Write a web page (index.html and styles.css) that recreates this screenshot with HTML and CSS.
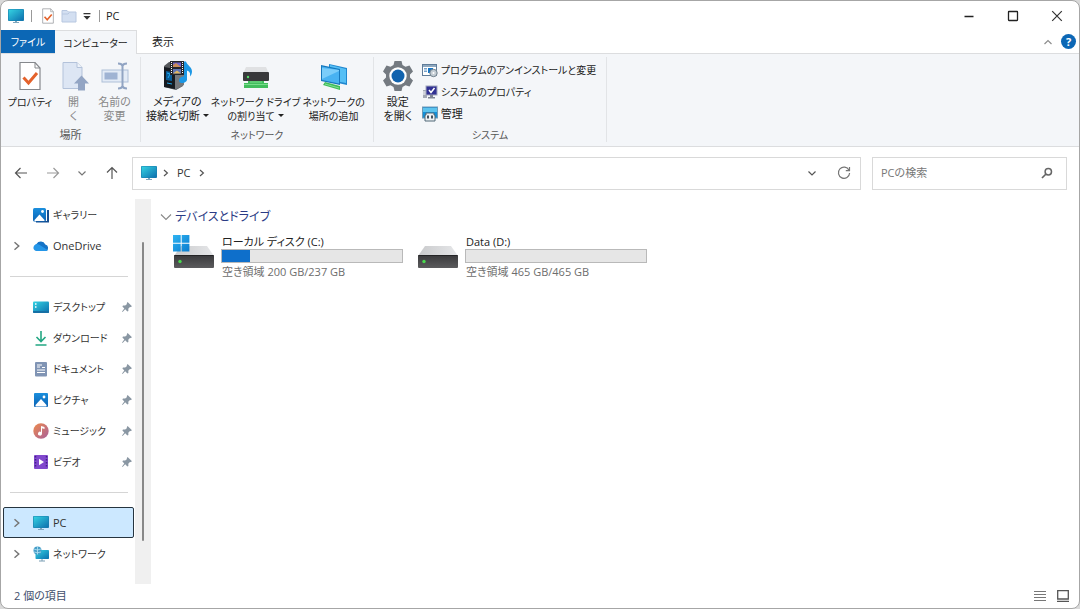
FILE: index.html
```html
<!DOCTYPE html>
<html lang="ja">
<head>
<meta charset="utf-8">
<meta name="viewport" content="width=device-width, initial-scale=1">
<title>PC</title>
<link rel="stylesheet" href="styles.css">
</head>
<body>
<svg class="defs" aria-hidden="true">
  <defs>
    <linearGradient id="screen" x1="0" y1="0" x2="1" y2="1"><stop offset="0" stop-color="#35d3e2"/><stop offset="1" stop-color="#0c6fae"/></linearGradient>
    <linearGradient id="steel" x1="0" y1="0" x2="0" y2="1"><stop offset="0" stop-color="#3a3a3c"/><stop offset="1" stop-color="#5b5b5d"/></linearGradient>
    <linearGradient id="lid" x1="0" y1="0" x2="1" y2="0"><stop offset="0" stop-color="#c9cacc"/><stop offset="1" stop-color="#e6e7e9"/></linearGradient>
    <linearGradient id="blue" x1="0" y1="0" x2="0" y2="1"><stop offset="0" stop-color="#1b8fdd"/><stop offset="1" stop-color="#0a62b4"/></linearGradient>
    <linearGradient id="pane" x1="0" y1="0" x2="1" y2="1"><stop offset="0" stop-color="#2fb4f2"/><stop offset="1" stop-color="#0a7ccf"/></linearGradient>
    <linearGradient id="music" x1="0" y1="0" x2="1" y2="1"><stop offset="0" stop-color="#ee8a4c"/><stop offset="1" stop-color="#a8609c"/></linearGradient>
    <symbol id="monitor" viewBox="0 0 16 16"><path d="M5 14h6v1H5zM7 12h2v2H7z" fill="#7fa6bd"/><rect y="1" width="16" height="12" rx="1" fill="#1a7fae"/><rect x=".6" y="1.5" width="14.8" height="11" rx=".6" fill="url(#screen)"/></symbol>
    <symbol id="chev" viewBox="0 0 8 8"><path d="M2 1l3.4 3L2 7" fill="none" stroke="currentColor" stroke-width="1.2"/></symbol>
    <symbol id="down" viewBox="0 0 10 10"><path d="M1.500 3.500L5 7l3.500-3.500" fill="none" stroke="currentColor" stroke-width="1.2"/></symbol>
    <symbol id="pin" viewBox="0 0 12 12"><path d="M6.600 1L11 5.200 9.800 6 8.600 6.200 7.300 7.700 7.400 9.900 6.400 10.500 4.200 8.300 1.600 11 1 10.600 3.300 7.500 1.400 5.600 2 4.600 4.200 4.600 5.800 3.200 5.900 1.900z" fill="#8a97a3"/></symbol>
    <symbol id="picture" viewBox="0 0 16 16"><rect x="1" y="1" width="14" height="14" rx="1" fill="url(#blue)"/><path d="M2.500 14.500V13L8 7l5.500 6v1.500z" fill="#fff"/><circle cx="11" cy="5" r="1.400" fill="#fff"/></symbol>
    <symbol id="checkpage" viewBox="0 0 24 30"><path d="M2 1.500h15l5 5.500v21.500H2z" fill="#fff" stroke="#85888c" stroke-width="1.200"/><path d="M17 1.500V7h5" fill="none" stroke="#85888c"/><path d="M5.500 16.500l5 5.500 8.500-10" fill="none" stroke="#e4622b" stroke-width="3"/></symbol>
    <symbol id="drive" viewBox="0 0 42 24"><path d="M8 1h26l7 10H1z" fill="url(#lid)"/><rect x="1" y="10" width="40" height="13" rx="1" fill="url(#steel)"/><path d="M1.500 10.500h39" stroke="#242426"/><circle cx="7" cy="16.500" r="1.700" fill="#4ad94e"/></symbol>
  </defs>
</svg>
<div class="window">
  <header class="titlebar">
    <svg class="i16"><use href="#monitor"/></svg>
    <span class="bar"></span>
    <button class="quick" aria-label="プロパティ"><svg class="quick-page"><use href="#checkpage"/></svg></button>
    <button class="quick" aria-label="新しいフォルダー"><svg class="i16" viewBox="0 0 16 16"><path d="M1 2.500h5l1.500 1.500H15v10H1z" fill="#d3dff1" stroke="#b7c7e0"/><path d="M1 6h6l1.500-1.500" fill="none" stroke="#b7c7e0"/></svg></button>
    <button class="quick quick-more" aria-label="クイック アクセスのカスタマイズ"><svg class="i10" viewBox="0 0 10 10"><path d="M1.500 2h7v1.300h-7zM1.500 5h7L5 8.800z" fill="#333"/></svg></button>
    <span class="bar"></span>
    <h1 class="title">PC</h1>
    <div class="controls">
      <button aria-label="最小化"><svg class="i12" viewBox="0 0 12 12"><path d="M1.500 6.500h9" stroke="#222" stroke-width="1.300"/></svg></button>
      <button aria-label="最大化"><svg class="i12" viewBox="0 0 12 12"><rect x="1.500" y="1.500" width="9" height="9" rx=".5" fill="none" stroke="#222" stroke-width="1.300"/></svg></button>
      <button aria-label="閉じる"><svg class="i12" viewBox="0 0 12 12"><path d="M1.200 1.200l9.600 9.600M10.800 1.200l-9.600 9.600" stroke="#333" stroke-width="1.200"/></svg></button>
    </div>
  </header>

  <nav class="tabs" aria-label="リボン">
    <button class="tab tab-file kana">ファイル</button>
    <button class="tab tab-active kana">コンピューター</button>
    <button class="tab">表示</button>
    <div class="tabs-end">
      <button aria-label="リボンの最小化"><svg class="i10" viewBox="0 0 10 10"><path d="M1.500 7L5 3.500 8.500 7" fill="none" stroke="#8d8d8d" stroke-width="1.200"/></svg></button>
      <button class="help" aria-label="ヘルプ">?</button>
    </div>
  </nav>

  <section class="ribbon">
    <div class="group">
      <div class="tools place">
        <button class="tool kana"><svg class="i32" viewBox="0 0 32 32"><use href="#checkpage" x="4" y="1" width="24" height="30"/></svg><span>プロパティ</span></button>
        <button class="tool off"><svg class="i32" viewBox="0 0 32 32"><path d="M5 2.500h14l5 5v21H5z" fill="#dde6f4" stroke="#b3c2da"/><path d="M19 2.500v5h5" fill="#eef3fa" stroke="#b3c2da"/><path d="M23.500 15.500l7.500 8h-4v7h-7v-7h-4z" fill="#93a5c4"/></svg><span>開<br>く</span></button>
        <button class="tool off"><svg class="i32" viewBox="0 0 32 32"><rect x="3" y="10" width="26" height="12" fill="#e3ebf6" stroke="#aebfd8"/><rect x="5.500" y="12.500" width="13" height="7" fill="#9fb3d3"/><path d="M23.500 5v23M19 3.500q4 0 4.500 2.500.5-2.500 4.500-2.500M19 28.500q4 0 4.500-2.500.5 2.500 4.500 2.500" fill="none" stroke="#91a4c3" stroke-width="2"/></svg><span>名前の<br>変更</span></button>
      </div>
      <h2>場所</h2>
    </div>
    <div class="group">
      <div class="tools net">
        <button class="tool"><svg class="i32" viewBox="0 0 32 32"><path d="M3 6l5-4h14v24l-7 4L3 27z" fill="#55585c"/><path d="M3 7l11 2v20L3 27z" fill="#161a20"/><path d="M14 9l9-4v20l-9 5z" fill="#75787c"/><path d="M5 11l6 1v9l-6-1z" fill="#075c99"/><path d="M6 13l3 1-2 4M6 23l5 1" stroke="#21a8ef" fill="none"/><rect x="9" y="1" width="14" height="14" fill="#25262c"/><path d="M12 2.500h8V7h-8z" fill="#7265c9"/><path d="M12 5l3-2 5 4h-8z" fill="#ca8b5a"/><path d="M12 9h8v4.500h-8z" fill="#6075b6"/><path d="M12 13.500l4-3 4 3z" fill="#e0b660"/><path d="M10.500 2v12M21.500 2v12" stroke="#fff" stroke-dasharray="1 1"/><path d="M25 1.500c1 4 6 5 6 10 0 2-1 4-2 5 .5-4-.5-5-3-6v9c0 4-8 5-8 1 0-3 3-4 5-4v-15z" fill="#1b97e5"/></svg><span>メディアの<br>接続と切断<i class="caret"></i></span></button>
        <button class="tool kana"><svg class="i32" viewBox="0 0 32 32"><path d="M6 7h20l3 7H3z" fill="#e0e1e3"/><rect x="3" y="12" width="26" height="9" rx="1" fill="#39393b"/><circle cx="8" cy="17" r="1.200" fill="#52db66"/><path d="M8 21h16v2h4v5H4v-5h4z" fill="#42bd5d"/><path d="M4 24.500h24M10 22h12" stroke="#78dd8b"/></svg><span>ネットワーク ドライブ<br>の割り当て<i class="caret"></i></span></button>
        <button class="tool kana"><svg class="i32" viewBox="0 0 32 32"><path d="M11 4l18 4v17l-18-4z" fill="#2087cf"/><path d="M12 5l16 4v14l-16-3z" fill="#55bff5"/><path d="M3 5l19 4v16L3 21z" fill="#1678bd"/><path d="M4 6.500l17 3.500v13.500L4 20z" fill="#48b2f2"/><path d="M4 8v11l17-8v-1z" fill="#7bcdfa"/><path d="M7 22l15 4v4L5 25z" fill="#3fbd5a"/><path d="M7 24l14 4" stroke="#84e095"/></svg><span>ネットワークの<br>場所の追加</span></button>
      </div>
      <h2 class="kana">ネットワーク</h2>
    </div>
    <div class="group">
      <div class="tools sys">
        <button class="tool"><svg class="i32" viewBox="0 0 32 32"><path d="M12.500 1h7l1 4 3 1.700 4-1.200 3.500 6-3 3v3l3 3-3.500 6-4-1.200-3 1.700-1 4h-7l-1-4-3-1.700-4 1.200-3.500-6 3-3v-3l-3-3 3.500-6 4 1.200 3-1.700z" fill="#747a81"/><circle cx="16" cy="16" r="8.700" fill="#fff"/><circle cx="16" cy="16" r="6.500" fill="#1263ae"/></svg><span>設定<br>を開く</span></button>
        <div class="small-tools">
          <button class="kana"><svg class="i16" viewBox="0 0 16 16"><rect x=".5" y="2.500" width="14" height="11" fill="#fff" stroke="#607c99"/><path d="M1 3h13v2H1z" fill="#8fa8bf"/><path d="M2 6h3v1.500H2zm0 2.500h3V10H2z" fill="#77a2cb"/><path d="M6 6h5v5H6z" fill="#1674c4"/><circle cx="11.500" cy="11" r="3.700" fill="#c4cdd4" stroke="#71808d"/><circle cx="11.500" cy="11" r="1" fill="#fff"/></svg>プログラムのアンインストールと変更</button>
          <button class="kana"><svg class="i16" viewBox="0 0 16 16"><path d="M1 6h4v8H1z" fill="#a4a9b5"/><path d="M1 8h3M1 10h3" stroke="#fff"/><rect x="4" y="2" width="11" height="9" fill="#303092" stroke="#a2a7bd"/><path d="M7 6l2 2.500L12.500 4" fill="none" stroke="#fff" stroke-width="1.500"/><path d="M8 11h3v2h2v1.500H6V13h2z" fill="#7e8593"/></svg>システムのプロパティ</button>
          <button><svg class="i16" viewBox="0 0 16 16"><rect x=".5" y="1" width="15" height="11" fill="#138fd8" stroke="#7099b5"/><path d="M1 2h14v4H1z" fill="#5cc3ee"/><path d="M4 9V7h8v2h1v6H3V9z" fill="#eef1f4" stroke="#516979"/><path d="M5 9.500h2v3H5zm4 0h2v3H9z" fill="#44515e"/></svg>管理</button>
        </div>
      </div>
      <h2 class="kana">システム</h2>
    </div>
  </section>

  <div class="navbar">
    <div class="history">
      <button aria-label="戻る"><svg class="i14" viewBox="0 0 14 14"><path d="M13 7H1.500M6.500 2l-5 5 5 5" fill="none" stroke="#555" stroke-width="1.200"/></svg></button>
      <button aria-label="進む"><svg class="i14" viewBox="0 0 14 14"><path d="M1 7h11.500M7.500 2l5 5-5 5" fill="none" stroke="#999" stroke-width="1.200"/></svg></button>
      <button aria-label="最近表示した場所"><svg class="i10"><use href="#down"/></svg></button>
      <button aria-label="上へ"><svg class="i14" viewBox="0 0 14 14"><path d="M7 13V1.500M2 6.500l5-5 5 5" fill="none" stroke="#555" stroke-width="1.200"/></svg></button>
    </div>
    <div class="address">
      <svg class="i16"><use href="#monitor"/></svg>
      <svg class="i8"><use href="#chev"/></svg>
      <a href="#pc">PC</a>
      <svg class="i8"><use href="#chev"/></svg>
      <div class="address-end">
        <button aria-label="以前の場所"><svg class="i10"><use href="#down"/></svg></button>
        <button aria-label="最新の情報に更新"><svg class="i14" viewBox="0 0 14 14"><path d="M12 4.200A5.600 5.600 0 1 0 12.600 7M12.500 1v3.700H8.800" fill="none" stroke="#777" stroke-width="1.200"/></svg></button>
      </div>
    </div>
    <label class="search">
      <input type="text" placeholder="PCの検索" aria-label="PCの検索">
      <svg class="i12" viewBox="0 0 12 12"><circle cx="7.300" cy="4.700" r="3.200" fill="none" stroke="#666" stroke-width="1.500"/><path d="M5 7l-4 4" stroke="#666" stroke-width="1.700"/></svg>
    </label>
  </div>

  <div class="body">
    <nav class="side" aria-label="ナビゲーション">
      <a class="row kana" href="#gallery"><span></span><svg class="i16" viewBox="0 0 16 16"><path d="M14 3h2v12.500H3V14h11z" fill="#174f91"/><rect y="1" width="13" height="13.500" rx="1.500" fill="url(#blue)"/><path d="M1.500 14v-1L6.500 7.500l5 5.500v1z" fill="#fff"/><circle cx="9.500" cy="4.500" r="1.400" fill="#fff"/></svg>ギャラリー</a>
      <a class="row" href="#onedrive"><svg class="i10"><use href="#chev"/></svg><svg class="i16" viewBox="0 0 16 16"><path d="M4 13a4 4 0 0 1-.5-7A5 5 0 0 1 12.300 6.500 3.400 3.400 0 0 1 13 13z" fill="#1473c7"/><path d="M1 7.700Q3 5 6 6.600L13 11l2 1q-1 1-2.500 1H4Q-1 12 1 7.700z" fill="#2496e8"/></svg>OneDrive</a>
      <hr>
      <a class="row kana" href="#desktop"><span></span><svg class="i16" viewBox="0 0 16 16"><rect y="2.500" width="16" height="11.500" rx="1" fill="url(#screen)"/><path d="M2 5h1.500M2 8h1.500" stroke="#fff" stroke-width="1.300"/><path d="M0 12h16v1a1 1 0 0 1-1 1H1a1 1 0 0 1-1-1z" fill="#1670a5"/></svg>デスクトップ<svg class="i12 pin"><use href="#pin"/></svg></a>
      <a class="row kana" href="#downloads"><span></span><svg class="i16" viewBox="0 0 16 16"><path d="M8 1v10M3.500 7L8 11.500 12.500 7M2.500 15h11" fill="none" stroke="#23a783" stroke-width="1.600"/></svg>ダウンロード<svg class="i12 pin"><use href="#pin"/></svg></a>
      <a class="row kana" href="#documents"><span></span><svg class="i16" viewBox="0 0 16 16"><rect x="2" y="1" width="12" height="14.500" rx="1" fill="#8094b4"/><path d="M4 4h5M4 6h3M9 6.500h3M4 9h8M4 11.500h8" stroke="#fff"/></svg>ドキュメント<svg class="i12 pin"><use href="#pin"/></svg></a>
      <a class="row kana" href="#pictures"><span></span><svg class="i16"><use href="#picture"/></svg>ピクチャ<svg class="i12 pin"><use href="#pin"/></svg></a>
      <a class="row kana" href="#music"><span></span><svg class="i16" viewBox="0 0 16 16"><circle cx="8" cy="8" r="7.700" fill="url(#music)"/><path d="M8 3l3.500 1v2L9 5.300v5.200a2 2 0 1 1-1-1.600z" fill="#fff"/></svg>ミュージック<svg class="i12 pin"><use href="#pin"/></svg></a>
      <a class="row kana" href="#videos"><span></span><svg class="i16" viewBox="0 0 16 16"><rect x="1" y="1" width="14" height="14" rx="1" fill="#8148cd"/><path d="M2.500 2v12M13.500 2v12" stroke="#45218a" stroke-width="1.500" stroke-dasharray="1.500 1.500"/><path d="M6 4.700L11 8l-5 3.300z" fill="#fff"/></svg>ビデオ<svg class="i12 pin"><use href="#pin"/></svg></a>
      <hr>
      <a class="row selected" href="#pc" aria-current="page"><svg class="i10"><use href="#chev"/></svg><svg class="i16"><use href="#monitor"/></svg>PC</a>
      <a class="row kana" href="#network"><svg class="i10"><use href="#chev"/></svg><svg class="i16" viewBox="0 0 16 16"><path d="M6 15h6M9 12v3" stroke="#7b9eb4"/><rect x="2.500" y="4" width="13.500" height="9" rx=".8" fill="url(#screen)"/><circle cx="4.500" cy="4.500" r="4" fill="#469dc8"/><path d="M1 3q3 2 7 0M1 6q3 1.500 7 0M4.500.500v8" fill="none" stroke="#b5e3f3" stroke-width=".8"/></svg>ネットワーク</a>
    </nav>
    <div class="scrollbar" aria-hidden="true"><div class="thumb"></div></div>
    <main class="content">
      <h2 class="section"><svg class="i12" viewBox="0 0 12 12"><path d="M1 3.500L6 8.500l5-5" fill="none" stroke="#888" stroke-width="1.100"/></svg>デバイスとドライブ</h2>
      <div class="drives">
        <article class="drive">
          <svg class="drive-icon" viewBox="0 0 42 36"><use href="#drive" x="0" y="11" width="42" height="24"/><path d="M0 1h7.700v7.700H0zM8.700 1h7.700v7.700H8.700zM0 9.700h7.700v7.700H0zM8.700 9.700h7.700v7.700H8.700z" fill="url(#pane)"/></svg>
          <div class="drive-info">
            <label for="disk-c">ローカル ディスク (C:)</label>
            <progress id="disk-c" value="37" max="237"></progress>
            <p>空き領域 200 GB/237 GB</p>
          </div>
        </article>
        <article class="drive">
          <svg class="drive-icon" viewBox="0 0 42 36"><use href="#drive" x="0" y="11" width="42" height="24"/></svg>
          <div class="drive-info">
            <label for="disk-d">Data (D:)</label>
            <progress id="disk-d" value="0" max="465"></progress>
            <p>空き領域 465 GB/465 GB</p>
          </div>
        </article>
      </div>
    </main>
  </div>

  <footer class="status">
    <span>2 個の項目</span>
    <div class="views">
      <button aria-label="詳細"><svg class="i12" viewBox="0 0 12 12"><path d="M0 1.500h12M0 4.500h12M0 7.500h12M0 10.500h12" stroke="#777"/></svg></button>
      <button aria-label="大アイコン"><svg class="i12" viewBox="0 0 12 12"><path d="M.7.500h10.600v8.500H.7z" fill="none" stroke="#555" stroke-width="1.300"/><path d="M0 11.300h12" stroke="#555" stroke-width="1.200"/></svg></button>
    </div>
  </footer>
</div>
</body>
</html>
```

FILE: styles.css
```css
* { box-sizing: border-box; }
body {
  margin: 0;
  background: #d9d9d9;
  color: #222;
  font: 11px/14px "Open Sans", "Noto Sans CJK JP", sans-serif;
  font-feature-settings: "palt";
}
button, input { font: inherit; font-feature-settings: inherit; color: inherit; }
button { border: 0; padding: 0; background: none; display: flex; align-items: center; justify-content: center; }
h1, h2, p { margin: 0; font: inherit; }
a { color: inherit; text-decoration: none; }
svg { flex: none; display: block; }
.defs { position: absolute; width: 0; height: 0; }
.i8 { width: 8px; height: 8px; }
.i10 { width: 10px; height: 10px; }
.i12 { width: 12px; height: 12px; }
.i14 { width: 14px; height: 14px; }
.i16 { width: 16px; height: 16px; }
.i32 { width: 32px; height: 32px; }

.window {
  min-height: 100vh;
  display: flex;
  flex-direction: column;
  background: #fff;
  border: 1px solid #a6a6a6;
  border-radius: 8px;
  overflow: hidden;
}

.titlebar { display: flex; align-items: center; height: 29px; padding-left: 7px; }
.bar { width: 1px; height: 12px; margin: 0 8px 0 7px; background: #999; }
.quick { width: 16px; margin-right: 5px; }
.quick-page { width: 14px; height: 16px; }
.quick-more { width: 10px; margin: 0; }
.title { margin-left: -2px; }
.controls { display: flex; margin-left: auto; }
.controls button { width: 44px; height: 28px; }

.tabs { display: flex; height: 24px; border-bottom: 1px solid #dcdddf; }
.tab { height: 23px; padding: 0 15px; }
.tab-file { width: 54px; padding: 0; background: #0c67b5; color: #fff; }
.tab-active {
  width: 82px;
  height: 24px;
  padding: 0;
  background: #f4f6f9;
  border: solid #dcdddf;
  border-width: 1px 1px 0 0;
}
.tabs-end { display: flex; align-items: center; gap: 8px; margin-left: auto; padding-right: 3px; }
.help { width: 15px; height: 15px; border-radius: 50%; background: #0c67b5; color: #fff; font-weight: 700; }

.ribbon { display: flex; height: 93px; padding: 3px 0 4px; background: #f4f6f9; border-bottom: 1px solid #dcdddf; }
.group { display: flex; flex-direction: column; justify-content: space-between; border-right: 1px solid #e2e4e7; }
.group h2 { text-align: center; color: #555; }
.tools { display: flex; align-items: flex-start; }
.tool { flex-direction: column; gap: 3px; padding-top: 3px; white-space: nowrap; }
.off { color: #888; }
.place { padding: 0 5px 0 6px; }
.place .tool { width: 46px; }
.place .off { width: 41px; }
.net { padding: 0 8px 0 5px; gap: 2px; }
.net .tool { min-width: 62px; }
.sys { padding: 0 10px 0 8px; }
.sys .tool { width: 32px; }
.caret { display: inline-block; margin: 0 0 3px 3px; border: solid transparent; border-width: 3px 3px 0; border-top-color: #222; }
.small-tools { display: flex; flex-direction: column; align-items: flex-start; padding: 2px 0 0 8px; }
.small-tools button { height: 22px; gap: 3px; white-space: nowrap; }

.navbar { display: flex; align-items: center; height: 52px; padding: 0 12px 0 13px; }
.history { display: flex; align-items: center; justify-content: space-between; width: 105px; color: #777; }
.address {
  flex: 1;
  display: flex;
  align-items: center;
  gap: 5px;
  height: 33px;
  margin: 0 11px 0 13px;
  padding: 0 9px 0 8px;
  border: 1px solid #d9d9d9;
  color: #555;
}
.address a { margin: 0 2px; color: #333; }
.address-end { display: flex; gap: 20px; margin-left: auto; }
.search { flex: 0 0 195px; display: flex; align-items: center; height: 33px; padding: 0 13px 0 8px; border: 1px solid #d9d9d9; }
.search input { flex: 1; min-width: 0; border: 0; padding: 0; outline: 0; background: none; }
.search input::placeholder { color: #777; opacity: 1; }

.body { flex: 1; display: flex; }
.side { width: 134px; padding-right: 1px; }
.row {
  display: grid;
  grid-template-columns: 17px 16px 1fr 12px;
  column-gap: 4px;
  align-items: center;
  height: 31px;
  margin-left: 2px;
  padding: 0 1px 0 9px;
  white-space: nowrap;
  color: #333;
}
.row > :first-child { color: #777; }
.selected { background: #cce8ff; border: 1px solid #26343f; border-radius: 2px; padding-left: 8px; padding-right: 0; }
.side hr { height: 30px; margin: 0 6px 0 9px; border: 0; background: linear-gradient(#d5d5d5, #d5d5d5) center / 100% 1px no-repeat; }
.scrollbar { width: 16px; padding: 43px 7px; background: #f0f0f0; display: flex; }
.thumb { width: 2px; background: #888; border-radius: 1px; }
.content { flex: 1; padding: 9px; }
.section { display: flex; align-items: center; gap: 3px; font-size: 12px; line-height: 18px; color: #2b3b85; }
.drives { display: flex; flex-wrap: wrap; gap: 14px; padding: 8px 0 0 13px; }
.drive { display: flex; gap: 6px; }
.drive-icon { width: 42px; height: 36px; }
.drive-info { display: flex; flex-direction: column; width: 182px; }
.drive-info label, .drive-info p { padding-left: 1px; }
.drive-info label { line-height: 15px; }
.drive-info p { margin-top: 2px; color: #6d6d6d; }
progress { appearance: none; display: block; width: 100%; height: 14px; border: 1px solid #b9b9b9; background: #e6e6e6; }
progress::-webkit-progress-bar { background: #e6e6e6; }
progress::-webkit-progress-value { background: #0e6fcb; }

.status { display: flex; align-items: center; justify-content: space-between; height: 24px; padding: 0 10px 0 13px; color: #3f4e6b; }
.views { display: flex; gap: 11px; }

.kana { font-size: 10px; }
```
